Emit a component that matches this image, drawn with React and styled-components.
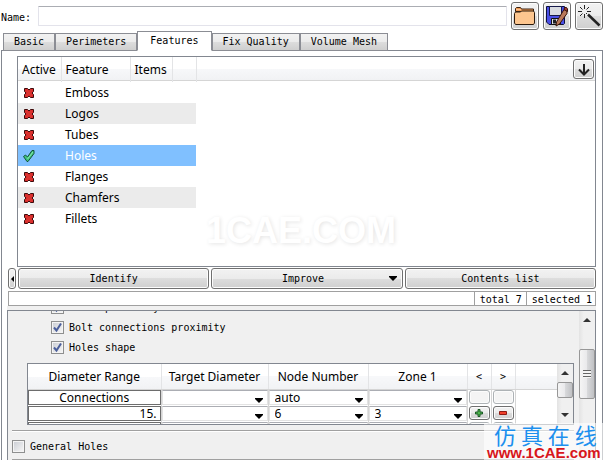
import { useState } from "react";
import styled, { createGlobalStyle, css } from "styled-components";

const tabs = ["Basic", "Perimeters", "Features", "Fix Quality", "Volume Mesh"];

const features = [
  { name: "Emboss", active: false },
  { name: "Logos", active: false },
  { name: "Tubes", active: false },
  { name: "Holes", active: true },
  { name: "Flanges", active: false },
  { name: "Chamfers", active: false },
  { name: "Fillets", active: false },
];

const diameters = [
  { range: "Connections", align: "center", target: "", nodes: "auto", zone: "", editable: false },
  { range: "15.", align: "right", target: "", nodes: "6", zone: "3", editable: true },
  { range: "", align: "right", target: "", nodes: "", zone: "", editable: false },
];

export default function App() {
  const [tab, setTab] = useState("Features");
  const [selected, setSelected] = useState("Holes");

  return (
    <>
      <GlobalStyle />
      <Window>
        <NameBar>
          <NameLabel htmlFor="name">Name:</NameLabel>
          <NameInput id="name" />
          <ToolButton aria-label="Open">
            <FolderIcon />
          </ToolButton>
          <ToolButton aria-label="Save as">
            <SaveIcon />
          </ToolButton>
          <ToolButton aria-label="Wizard">
            <WandIcon />
          </ToolButton>
        </NameBar>

        <TabList role="tablist">
          {tabs.map((name) => (
            <Tab
              key={name}
              role="tab"
              aria-selected={name === tab}
              $current={name === tab}
              onClick={() => setTab(name)}
            >
              {name}
            </Tab>
          ))}
        </TabList>

        <Page>
          <FeatureArea>
            <FeatureBox>
              <FeatureHeaderFill />
              <FeatureTable>
                <colgroup>
                  <col width="43" />
                  <col width="69" />
                  <col width="42" />
                  <col width="24" />
                </colgroup>
                <thead>
                  <tr>
                    <th>Active</th>
                    <th>Feature</th>
                    <th>Items</th>
                    <th />
                  </tr>
                </thead>
                <tbody>
                  {features.map(({ name, active }) => (
                    <FeatureRow
                      key={name}
                      $selected={name === selected}
                      onClick={() => setSelected(name)}
                    >
                      <td>{active ? <TickIcon /> : <CrossIcon />}</td>
                      <td>{name}</td>
                      <td />
                      <td />
                    </FeatureRow>
                  ))}
                </tbody>
              </FeatureTable>
              <SortButton aria-label="Scroll down">
                <DownArrowIcon />
              </SortButton>
              <Watermark>1CAE.COM</Watermark>
            </FeatureBox>

            <Actions>
              <CollapseButton aria-label="Collapse">
                <svg width="3" height="6" viewBox="0 0 3 6">
                  <path d="M3 0v6L0 3z" />
                </svg>
              </CollapseButton>
              <ActionButton>
                <ActionLabel>Identify</ActionLabel>
              </ActionButton>
              <ActionButton>
                <ActionLabel>Improve</ActionLabel>
                <DropArrow />
              </ActionButton>
              <ActionButton>
                <ActionLabel>Contents list</ActionLabel>
              </ActionButton>
            </Actions>

            <StatusBar>
              <StatusCell>total 7</StatusCell>
              <StatusCell>selected 1</StatusCell>
            </StatusBar>
          </FeatureArea>

          <OptionsPanel>
            <Options>
              <OptionList>
                <Option>
                  <Checkbox defaultChecked />
                  Holes proximity
                </Option>
                <Option>
                  <Checkbox defaultChecked />
                  Bolt connections proximity
                </Option>
                <Option>
                  <Checkbox defaultChecked />
                  Holes shape
                </Option>
              </OptionList>

              <DiameterBox>
                <DiameterScroll>
                  <DiameterTable>
                    <colgroup>
                      <col width="133" />
                      <col width="107" />
                      <col width="100" />
                      <col width="99" />
                      <col width="24" />
                      <col width="24" />
                      <col />
                    </colgroup>
                    <thead>
                      <tr>
                        <th>Diameter Range</th>
                        <th>Target Diameter</th>
                        <th>Node Number</th>
                        <th>Zone 1</th>
                        <ArrowHead>&lt;</ArrowHead>
                        <ArrowHead>&gt;</ArrowHead>
                        <th />
                      </tr>
                    </thead>
                    <tbody>
                      {diameters.map((row, i) => (
                        <tr key={i}>
                          <td>
                            <RangeInput
                              aria-label="Diameter range"
                              defaultValue={row.range}
                              $align={row.align}
                            />
                          </td>
                          <td>
                            <Combo label="Target diameter" value={row.target} />
                          </td>
                          <td>
                            <Combo label="Node number" value={row.nodes} />
                          </td>
                          <td>
                            <Combo label="Zone 1" value={row.zone} />
                          </td>
                          <td>
                            <CellButton aria-label="Add zone" disabled={!row.editable}>
                              {row.editable && <PlusIcon />}
                            </CellButton>
                          </td>
                          <td>
                            <CellButton aria-label="Remove zone" disabled={!row.editable}>
                              {row.editable && <MinusIcon />}
                            </CellButton>
                          </td>
                          <td />
                        </tr>
                      ))}
                    </tbody>
                  </DiameterTable>
                </DiameterScroll>
                <ScrollTrack>
                  <ScrollArrow />
                  <ScrollThumb $height={16} />
                  <Spacer />
                  <ScrollArrow $down />
                </ScrollTrack>
              </DiameterBox>

              <GeneralOption>
                <Checkbox />
                General Holes
              </GeneralOption>
              <Rule />
            </Options>
            <ScrollTrack>
              <ScrollArrow />
              <ScrollGap />
              <ScrollThumb $height={50}>
                <Grip />
              </ScrollThumb>
            </ScrollTrack>
          </OptionsPanel>
        </Page>

        <SiteMark>
          <SiteName>仿 真 在 线</SiteName>
          <SiteLink href="#">www.1CAE.com</SiteLink>
        </SiteMark>
      </Window>
    </>
  );
}

function Checkbox(props) {
  return (
    <CheckFrame>
      <CheckInput type="checkbox" {...props} />
      <svg width="13" height="13" viewBox="0 0 13 13">
        <path d="M3 6.500L5.500 9.500L10 2.500" fill="none" stroke="#4b5f9b" strokeWidth="2" />
      </svg>
    </CheckFrame>
  );
}

function Combo({ label, value }) {
  return (
    <ComboBox>
      <ComboSelect aria-label={label} defaultValue={value}>
        <option>{value}</option>
      </ComboSelect>
      <DropArrow />
    </ComboBox>
  );
}

function DropArrow() {
  return (
    <svg width="8" height="5" viewBox="0 0 8 5">
      <path d="M0 0h8v1L4 5L0 1z" />
    </svg>
  );
}

function ScrollArrow({ $down }) {
  return (
    <ScrollButton aria-label={$down ? "Scroll down" : "Scroll up"}>
      <svg width="8" height="4" viewBox="0 0 8 4">
        <path d={$down ? "M0 0h8L4 4z" : "M0 4h8L4 0z"} fill="#333" />
      </svg>
    </ScrollButton>
  );
}

function FolderIcon() {
  return (
    <svg width="22" height="18" viewBox="0 0 22 18">
      <path d="M1.500 4.500v-3l1-1h4l1 1.500h12v3z" fill="#ee9a55" stroke="#3a2110" />
      <path d="M2 2.500h5" stroke="#ffc491" />
      <path d="M.5 6.500l1-1.500h5l1-1h12l1 1.500V16l-1 1.500h-18L.5 16z" fill="#fdc68f" stroke="#2b1a0c" />
    </svg>
  );
}

function SaveIcon() {
  return (
    <svg width="24" height="22" viewBox="0 0 24 22">
      <path d="M1.500 1.500h18v17l-1 1H4l-2.500-2.500z" fill="#4a4fe6" stroke="#0c0f3c" />
      <path d="M4.500 1.500h12v9h-12z" fill="#d9dbe0" stroke="#16194a" />
      <path d="M6.500 13.500h9v6h-9z" fill="#dfe1e6" stroke="#111" />
      <path d="M8 14.500h3v4H8z" fill="#1d2027" />
      <path d="M19 4.500l3 1.500v2.500L14.500 19l-3.500 2 .5-4z" fill="#b9795a" stroke="#35140a" />
      <path d="M19.500 2.500l2 0 1 1.500v2.500l-3.500-2z" fill="#a83a34" stroke="#35140a" />
    </svg>
  );
}

function WandIcon() {
  return (
    <svg width="24" height="22" viewBox="0 0 24 22" fill="none" stroke="#222">
      <path d="M11 9.500L22.500 20.500" strokeWidth="2.500" />
      <path d="M7.500 0v4M7.500 9v4M1 6.500h4M10 6.500h4M3 2l2.500 2.500M12 2L9.500 4.500M3 11l2.500-2.500M9 8l1 1" />
    </svg>
  );
}

function DownArrowIcon() {
  return (
    <svg width="12" height="13" viewBox="0 0 12 13" fill="none" stroke="#222" strokeWidth="2">
      <path d="M6 1v10M1 6.500l5 5 5-5" />
    </svg>
  );
}

function CrossIcon() {
  return (
    <svg width="12" height="12" viewBox="0 0 12 12">
      <path
        d="M1.500 1.500h3L6 3l1.500-1.500h3v3L9 6l1.500 1.500v3h-3L6 9l-1.500 1.500h-3v-3L3 6 1.500 4.500z"
        fill="#d92b2b"
        stroke="#3d0c0c"
      />
      <path d="M3 3l6 6M9 3L3 9" stroke="#d93430" strokeWidth="2" />
    </svg>
  );
}

function TickIcon() {
  return (
    <svg width="12" height="12" viewBox="0 0 12 12">
      <path d="M.5 6.500l2-1.500 2 2L9 .5h2v3L5 11.500H4z" fill="#3fc47d" stroke="#14523a" />
      <path d="M4.500 9L10 2" stroke="#8be8b4" />
    </svg>
  );
}

function PlusIcon() {
  return (
    <svg width="8" height="8" viewBox="0 0 8 8">
      <path d="M3 .5h2V3h2.500v2H5v2.500H3V5H.5V3H3z" fill="#4fb54d" stroke="#1c5a27" />
    </svg>
  );
}

function MinusIcon() {
  return (
    <svg width="8" height="4" viewBox="0 0 8 4">
      <path d="M.5 .5h7v3h-7z" fill="#f0402c" stroke="#8d1a12" />
    </svg>
  );
}

const border = "#828790";
const headerFill = "linear-gradient(#ffffff 50%, #f7f8fa 50%, #f1f2f4)";
const buttonFill = "linear-gradient(#f2f2f2, #ebebeb 50%, #dddddd 50%, #cfcfcf)";

const GlobalStyle = createGlobalStyle`
  * {
    box-sizing: border-box;
  }

  body {
    margin: 0;
    overflow: hidden;
    background: #fff;
    color: #000;
    font: 10px/12px "DejaVu Sans Mono", "Liberation Mono", monospace;
  }

  button,
  input,
  select {
    margin: 0;
    padding: 0;
    color: inherit;
    font: inherit;
  }

  svg {
    display: block;
    flex: none;
  }
`;

const tableFont = css`
  font-family: "Noto Sans", "Open Sans", sans-serif;
  font-size: 12px;
  line-height: 16px;
`;

const face = css`
  border: 1px solid #707070;
  border-radius: 3px;
  background: ${buttonFill};
  box-shadow: inset 0 0 0 1px #fcfcfc;
`;

const Window = styled.div`
  position: relative;
  display: flex;
  flex-direction: column;
  height: 100vh;
  overflow: hidden;
`;

const NameBar = styled.div`
  display: flex;
  align-items: center;
  gap: 4px;
  padding: 2px 3px 0 1px;
`;

const NameLabel = styled.label`
  width: 33px;
  padding-top: 3px;
`;

const NameInput = styled.input`
  flex: 1;
  min-width: 0;
  height: 20px;
  border: 1px solid #e3e3eb;
  border-top-color: #abadb3;
  border-radius: 1px;
  background: #fff;
`;

const ToolButton = styled.button`
  ${face}
  display: grid;
  place-items: center;
  width: 28px;
  height: 28px;
`;

const TabList = styled.div`
  position: relative;
  z-index: 1;
  display: flex;
  align-items: flex-end;
  height: 20px;
  margin: 1px 0 -1px 3px;
`;

const Tab = styled.button`
  flex: none;
  height: 18px;
  padding: 0 10px;
  border: 1px solid #8b8d94;
  background: ${buttonFill};

  ${({ $current }) =>
    $current &&
    css`
      height: 20px;
      padding: 0 12px;
      border-bottom-color: #fff;
      background: #fff;
    `}
`;

const Page = styled.main`
  flex: 1;
  display: flex;
  flex-direction: column;
  min-height: 0;
  margin: 0 3px 0 1px;
  padding: 5px 6px 0 5px;
  border: solid ${border};
  border-width: 1px 1px 0;
`;

const FeatureArea = styled.section`
  display: flex;
  flex-direction: column;
`;

const FeatureBox = styled.div`
  position: relative;
  height: 211px;
  margin-left: 10px;
  border: 1px solid ${border};
`;

const FeatureHeaderFill = styled.div`
  height: 24px;
  margin-bottom: -24px;
  border-bottom: 1px solid #d5d5d5;
  background: ${headerFill};
`;

const FeatureTable = styled.table`
  ${tableFont}
  position: relative;
  table-layout: fixed;
  width: 178px;
  border-collapse: collapse;

  th {
    height: 25px;
    padding: 1px 4px 0;
    border-right: 1px solid #e3e4e6;
    font-weight: normal;
    text-align: left;
  }

  td {
    height: 21px;
    padding: 0 4px;
    white-space: nowrap;
  }

  td:first-child {
    padding-left: 5px;
  }
`;

const FeatureRow = styled.tr`
  &:nth-child(even) {
    background: #ebebeb;
  }

  ${({ $selected }) =>
    $selected &&
    css`
      && {
        background: #80c0ff;
        color: #fff;
      }
    `}
`;

const SortButton = styled.button`
  ${face}
  position: absolute;
  top: 2px;
  right: 1px;
  display: grid;
  place-items: center;
  width: 21px;
  height: 20px;
`;

const Watermark = styled.div`
  position: absolute;
  top: 156px;
  left: 188px;
  color: #fff;
  font: bold 36px/36px "Liberation Sans", Arial, sans-serif;
  text-shadow: 1px 1px 4px #e4e4e4;
`;

const Actions = styled.div`
  display: flex;
  gap: 2px;
  margin: 1px 0 0 1px;
`;

const CollapseButton = styled.button`
  ${face}
  display: grid;
  place-items: center;
  width: 8px;
  height: 21px;
`;

const ActionButton = styled.button`
  ${face}
  flex: 1;
  display: flex;
  align-items: center;
  height: 21px;
  padding: 0 5px;
`;

const ActionLabel = styled.span`
  flex: 1;
  text-align: center;
`;

const StatusBar = styled.div`
  display: flex;
  justify-content: flex-end;
  gap: 1px;
  height: 15px;
  margin: 2px 0 0 1px;
  border: 1px solid #a0a0a0;
`;

const StatusCell = styled.div`
  padding: 2px 3px 0 5px;
  border-left: 1px solid #a0a0a0;
  line-height: 11px;
`;

const OptionsPanel = styled.section`
  flex: 1;
  display: flex;
  min-height: 0;
  margin-top: 4px;
  border: 1px solid ${border};
  border-bottom: 0;
  background: #f0f0f0;
  box-shadow: 0 -4px #f0f0f0;
  overflow: hidden;
`;

const Options = styled.div`
  flex: 1;
  min-width: 0;
`;

const OptionList = styled.div`
  display: flex;
  flex-direction: column;
  gap: 7px;
  justify-content: flex-end;
  height: 52px;
  margin-left: 43px;
  padding-bottom: 9px;
  overflow: hidden;
`;

const Option = styled.label`
  display: flex;
  align-items: center;
  gap: 5px;
`;

const CheckFrame = styled.span`
  flex: none;
  display: grid;

  > * {
    grid-area: 1 / 1;
  }

  > svg {
    visibility: hidden;
    pointer-events: none;
  }

  > input:checked + svg {
    visibility: visible;
  }
`;

const CheckInput = styled.input`
  appearance: none;
  width: 13px;
  height: 13px;
  padding: 1px;
  border: 1px solid #8e8f8f;
  background: linear-gradient(135deg, #cdd0d6, #f4f4f4) content-box, #f4f4f4;
`;

const DiameterBox = styled.div`
  display: flex;
  height: 62px;
  margin: 0 5px 0 19px;
  border: 1px solid ${border};
  background: #fff;
`;

const DiameterScroll = styled.div`
  flex: 1;
  min-width: 0;
  overflow: hidden;
`;

const DiameterTable = styled.table`
  ${tableFont}
  table-layout: fixed;
  width: 100%;
  border-collapse: collapse;

  th {
    height: 25px;
    padding: 2px 0 0;
    border-right: 1px solid #e3e4e6;
    border-bottom: 1px solid #d5d5d5;
    background: ${headerFill};
    font-weight: normal;
    white-space: nowrap;
  }

  td {
    height: 16px;
    padding: 0;
    border-right: 1px solid #d5d5d5;
  }

  td:last-child,
  th:last-child {
    border-right: 0;
  }
`;

const ArrowHead = styled.th`
  font: 10px/12px "DejaVu Sans Mono", monospace;
`;

const RangeInput = styled.input`
  display: block;
  width: 100%;
  height: 15px;
  padding: 0 3px;
  border: 1px solid #6d6d6d;
  background: #fff;
  line-height: 14px;
  text-align: ${({ $align }) => $align};
`;

const ComboBox = styled.div`
  display: flex;
  align-items: flex-end;
  height: 15px;
  padding: 0 4px 1px 0;
  border: 1px solid #e3e3e3;
  border-top-color: #abadb3;
`;

const ComboSelect = styled.select`
  appearance: none;
  flex: 1;
  min-width: 0;
  height: 14px;
  padding: 2px 0 0 5px;
  border: 0;
  background: none;
  line-height: 14px;
`;

const CellButton = styled.button`
  ${face}
  display: grid;
  place-items: center;
  width: 21px;
  height: 14px;
  margin: 0 auto;

  &:disabled {
    border-color: #adb2b5;
    background: #f4f4f4;
  }
`;

const ScrollTrack = styled.div`
  display: flex;
  flex-direction: column;
  width: 16px;
  background: linear-gradient(90deg, #e3e3e3, #f0f0f0 30%);
`;

const ScrollButton = styled.button`
  display: grid;
  place-items: center;
  flex: none;
  height: 18px;
  border: 0;
  background: none;
`;

const ScrollThumb = styled.div`
  display: grid;
  place-items: center;
  flex: none;
  height: ${({ $height }) => $height}px;
  border: 1px solid #979797;
  border-radius: 2px;
  background: linear-gradient(90deg, #f5f5f5, #e9e9eb 50%, #d9dadc 50%, #c0c1c4);
`;

const Grip = styled.div`
  width: 8px;
  height: 8px;
  background: repeating-linear-gradient(#666 0 1px, #f5f5f5 1px 3px);
`;

const Spacer = styled.div`
  flex: 1;
`;

const ScrollGap = styled.div`
  height: 20px;
`;

const GeneralOption = styled.label`
  display: flex;
  align-items: center;
  gap: 5px;
  height: 29px;
  margin: 5px 5px 0 4px;
  padding-top: 3px;
  border-top: 1px solid #a0a0a0;
  box-shadow: inset 0 1px #fff;
`;

const Rule = styled.hr`
  height: 1px;
  margin: 0 5px 0 4px;
  border: 0;
  background: #a0a0a0;
`;

const SiteMark = styled.div`
  position: absolute;
  right: 0;
  bottom: 0;
  width: 122px;
  padding-left: 3px;
  background: rgba(255, 255, 255, 0.6);
`;

const SiteName = styled.div`
  padding-left: 7px;
  color: #1d90ee;
  font: 22px/22px "Noto Sans CJK SC", sans-serif;
  white-space: nowrap;
`;

const SiteLink = styled.a`
  display: block;
  color: #d8161b;
  font: bold 15px/15px "Liberation Sans", Arial, sans-serif;
  text-decoration: none;
`;
